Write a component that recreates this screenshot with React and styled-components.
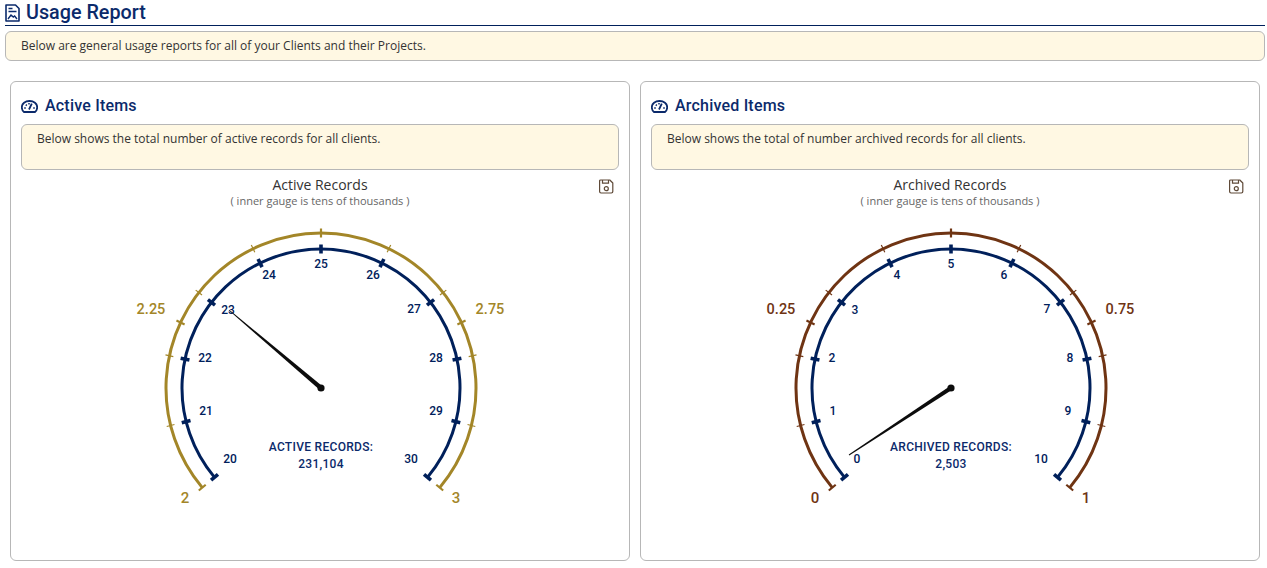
import React from "react";
import styled, { createGlobalStyle } from "styled-components";

const Global = createGlobalStyle`
  html, body { margin: 0; padding: 0; background: #fff; }
  body { font-family: "Open Sans", sans-serif; color: #333; }
`;

const NAVY = "#00205b";
const DISPLAY = `"Roboto", "Liberation Sans", sans-serif`;

const Page = styled.div`
  width: 1267px;
  height: 568px;
  box-sizing: border-box;
  padding: 0 2px 0 5px;
  overflow: hidden;
`;

const PageTitle = styled.h1`
  display: flex;
  align-items: center;
  gap: 6px;
  height: 25px;
  margin: 0;
  border-bottom: 1px solid ${NAVY};
  font: 500 21px/24px ${DISPLAY};
  color: #0b2a6b;
`;

const PageTitleText = styled.span`
  display: inline-block;
  margin-top: -2px;
  transform: scaleX(0.94);
  transform-origin: left center;
`;

const Notice = styled.div`
  box-sizing: border-box;
  border: 1px solid #b7b7b7;
  border-radius: 6px;
  background: #fff8e3;
  color: #333;
  font-size: 12px;
  line-height: 16px;
  height: ${(p) => p.$height}px;
  padding: ${(p) => p.$padTop}px 15px 0;
`;

const TopNotice = styled(Notice)`
  margin-top: 5px;
`;

const Panels = styled.div`
  display: flex;
  gap: 10px;
  margin: 20px 0 0 5px;
`;

const Panel = styled.section`
  box-sizing: border-box;
  width: 620px;
  height: 480px;
  border: 1px solid #b7b7b7;
  border-radius: 6px;
  padding: 14px 10px 0;
`;

const PanelTitle = styled.h2`
  display: flex;
  align-items: center;
  gap: 7px;
  height: 20px;
  margin: 0 0 8px;
  font: 500 16px/20px ${DISPLAY};
  color: #0b2a6b;
  letter-spacing: 0.2px;
`;

const Chart = styled.div`
  position: relative;
  margin-top: 7px;
  text-align: center;
`;

const ChartTitle = styled.div`
  font-size: 14px;
  line-height: 16px;
  color: #333;
`;

const ChartSub = styled.div`
  font-size: 11px;
  line-height: 15px;
  color: #666;
`;

const SaveButton = styled.span`
  position: absolute;
  top: 0;
  right: 5px;
  width: 15px;
  height: 15px;
  display: block;
  color: #5f4a38;
`;

const GaugeSvg = styled.svg`
  display: block;
  width: 598px;
  height: 340px;
  margin-top: 2px;
`;

const Label = styled.text`
  font-family: ${DISPLAY};
  font-size: ${(p) => p.$size || 12}px;
  font-weight: 500;
  fill: ${(p) => p.$color};
  text-anchor: middle;
  letter-spacing: ${(p) => p.$spacing || 0}px;
`;

const CX = 300;
const CY = 178;
const polar = (r, deg) => {
  const a = (deg * Math.PI) / 180;
  return [CX + r * Math.sin(a), CY - r * Math.cos(a)];
};

const arcPath = (r) => {
  const [x1, y1] = polar(r, -130);
  const [x2, y2] = polar(r, 130);
  return `M${x1} ${y1}A${r} ${r} 0 1 1 ${x2} ${y2}`;
};

const Tick = ({ r1, r2, deg, color, width }) => {
  const [x1, y1] = polar(r1, deg);
  const [x2, y2] = polar(r2, deg);
  return <line x1={x1} y1={y1} x2={x2} y2={y2} stroke={color} strokeWidth={width} />;
};

const innerOffsets = [
  [-91, 71], [-115, 23], [-116, -30], [-93, -78], [-52, -113], [0, -124],
  [52, -113], [93, -79], [115, -30], [115, 23], [90, 71],
];
const singleDigitShift = [-3, -3, -3, -3, -2, 0, 1, 3, 4, 2];

const outerTicks = [-130, -104, -78, -65, -52, -26, 0, 26, 52, 65, 78, 104, 130];
const outerMajor = new Set([-130, -65, 0, 65, 130]);

const Gauge = ({ outer, labels, inner, title, value, tip }) => {
  const [dx, dy] = tip;
  const len = Math.hypot(dx, dy);
  const ux = -dy / len;
  const uy = dx / len;
  const base = 2.2;
  const end = 0.45;
  const points = [
    [CX + ux * base, CY + uy * base],
    [CX + dx + ux * end, CY + dy + uy * end],
    [CX + dx - ux * end, CY + dy - uy * end],
    [CX - ux * base, CY - uy * base],
  ].map((p) => p.join(" ")).join(" ");
  return (
    <GaugeSvg viewBox="0 0 598 340">
      <path d={arcPath(155)} fill="none" stroke={outer} strokeWidth="3" />
      {outerTicks.map((d) => (
        <Tick
          key={d}
          deg={d}
          r1={outerMajor.has(d) ? 150.5 : 151}
          r2={outerMajor.has(d) ? 159.5 : 159}
          color={outer}
          width={outerMajor.has(d) ? 2.2 : 1.2}
        />
      ))}
      <path d={arcPath(139)} fill="none" stroke={NAVY} strokeWidth="3" />
      {inner.map((_, i) => (
        <Tick key={i} deg={-130 + i * 26} r1={134.5} r2={143.5} color={NAVY} width="3.6" />
      ))}
      {inner.map((t, i) => (
        <Label
          key={t}
          $color={NAVY}
          x={CX + innerOffsets[i][0] + (t < 10 ? singleDigitShift[t] : 0)}
          y={CY + innerOffsets[i][1] + 4}
        >
          {t}
        </Label>
      ))}
      <Label $color={outer} $size={14.5} x={CX - 170} y={CY - 74}>{labels[1]}</Label>
      <Label $color={outer} $size={14.5} x={CX + 169} y={CY - 74}>{labels[2]}</Label>
      <Label $color={outer} $size={15} x={CX - 136} y={CY + 115}>{labels[0]}</Label>
      <Label $color={outer} $size={15} x={CX + 135} y={CY + 115}>{labels[3]}</Label>
      <Label $color="#0b2a6b" $spacing={0.3} x={CX} y={CY + 63}>{title}</Label>
      <Label $color="#0b2a6b" $spacing={0.3} x={CX} y={CY + 80}>{value}</Label>
      <polygon points={points} fill="#0c0c0c" />
      <circle cx={CX} cy={CY} r="3.6" fill="#0c0c0c" />
    </GaugeSvg>
  );
};

const ReportIcon = () => (
  <svg width="15" height="18" viewBox="0 0 15 18" fill="none" stroke="#0b2a6b" strokeWidth="1.6">
    <path d="M1 1h9.500L14 4.500V17H1z" strokeLinejoin="round" />
    <path d="M3.500 4.500h4M3.500 7.500h8" strokeWidth="1.300" />
    <path d="M3 15l3-4 2.300 2 1.300-1 2.400 3" strokeWidth="1.400" />
  </svg>
);

const DialIcon = () => (
  <svg width="17" height="13" viewBox="0 0 17 13" fill="none" stroke="#0b2a6b" strokeWidth="1.800">
    <path d="M3 12h11c1.300-1 2.200-3 2.200-4.800C16.200 3.400 12.800 1 8.500 1S.8 3.400.8 7.200C.8 9 1.700 11 3 12z" strokeLinejoin="round" />
    <path d="M8 9.500L10.800 3.600" strokeWidth="1.800" />
    <path d="M3.200 8h1.600M4.800 4.600l1 1M8 3v1.500M12.200 8h1.600" strokeWidth="1.500" />
  </svg>
);

const SaveIcon = () => (
  <svg width="15" height="15" viewBox="0 0 15 15" fill="none" stroke="currentColor" strokeWidth="1.200">
    <path d="M1.600 1h9.200l3 3v8.600a1.400 1.400 0 0 1-1.400 1.400H2a1.400 1.400 0 0 1-1.400-1.400V2a1 1 0 0 1 1-1z" strokeLinejoin="round" />
    <path d="M3.500 1v3.200h6V1" />
    <circle cx="7.300" cy="9.700" r="2" />
  </svg>
);

const ChartPanel = ({ heading, note, title, sub, gauge }) => (
  <Panel>
    <PanelTitle>
      <DialIcon />
      {heading}
    </PanelTitle>
    <Notice $height={46} $padTop={6}>{note}</Notice>
    <Chart>
      <SaveButton><SaveIcon /></SaveButton>
      <ChartTitle>{title}</ChartTitle>
      <ChartSub>{sub}</ChartSub>
      <Gauge {...gauge} />
    </Chart>
  </Panel>
);

export default function App() {
  return (
    <Page>
      <Global />
      <PageTitle>
        <ReportIcon />
        <PageTitleText>Usage Report</PageTitleText>
      </PageTitle>
      <TopNotice $height={30} $padTop={6}>
        Below are general usage reports for all of your Clients and their Projects.
      </TopNotice>
      <Panels>
        <ChartPanel
          heading="Active Items"
          note="Below shows the total number of active records for all clients."
          title="Active Records"
          sub="( inner gauge is tens of thousands )"
          gauge={{
            outer: "#a38628",
            labels: ["2", "2.25", "2.75", "3"],
            inner: [20, 21, 22, 23, 24, 25, 26, 27, 28, 29, 30],
            title: "ACTIVE RECORDS:",
            value: "231,104",
            tip: [-92, -78],
          }}
        />
        <ChartPanel
          heading="Archived Items"
          note="Below shows the total of number archived records for all clients."
          title="Archived Records"
          sub="( inner gauge is tens of thousands )"
          gauge={{
            outer: "#6f3413",
            labels: ["0", "0.25", "0.75", "1"],
            inner: [0, 1, 2, 3, 4, 5, 6, 7, 8, 9, 10],
            title: "ARCHIVED RECORDS:",
            value: "2,503",
            tip: [-102, 67],
          }}
        />
      </Panels>
    </Page>
  );
}
